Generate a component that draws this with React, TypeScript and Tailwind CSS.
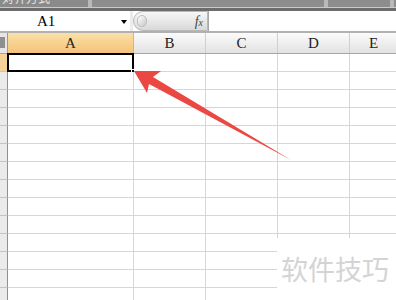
import React from "react";

const cols = [
  { key: "A", w: "w-[126px]" },
  { key: "B", w: "w-[72px]" },
  { key: "C", w: "w-[72px]" },
  { key: "D", w: "w-[72px]" },
];

const rows = Array.from({ length: 14 }, (_, i) => i + 1);

function RibbonStrip() {
  return (
    <div className="h-[11px] bg-[#6c6c6c]">
      <div className="flex h-[7px] gap-[4px] bg-[#b9b9b9]">
        <div className="relative w-[88px] overflow-hidden bg-[#8a8a8a]">
          <span className="absolute left-[2px] top-[-9px] text-[12px] leading-[14px] text-[#e6e6e6] [font-family:'Noto_Sans_CJK_SC',sans-serif]">
            对齐方式
          </span>
        </div>
        <div className="w-[232px] bg-[#8d8d8d]" />
        <div className="w-[62px] bg-[#8d8d8d]" />
        <div className="flex-1 bg-[#8d8d8d]" />
      </div>
      <div className="h-[1px] bg-[#c9c9c9]" />
    </div>
  );
}

function FormulaBar() {
  return (
    <div className="flex h-[22px] border-b-2 border-[#b1b1b1] bg-white">
      <div className="relative flex w-[130px] items-center pl-[37px] text-[15px] text-black [font-family:'Liberation_Serif',serif]">
        A1
        <span className="absolute left-[121px] top-[9px] h-0 w-0 border-x-[3.5px] border-t-[4px] border-x-transparent border-t-black" />
      </div>
      <div className="w-[3px] bg-[#ececec]" />
      <div className="flex w-[75px] items-center rounded-l-full border border-[#b8b8b8] bg-gradient-to-b from-[#f7f7f7] to-[#d9d9d9]">
        <span className="ml-[3px] h-[12px] w-[10px] rounded-full border border-[#bdbdbd] bg-gradient-to-br from-[#ffffff] to-[#c8c8c8]" />
        <span className="ml-auto mr-[4px] text-[14px] italic text-[#444] [font-family:'Liberation_Serif',serif]">
          f<span className="text-[10px]">x</span>
        </span>
      </div>
      <div className="flex-1 border-l border-[#a8a8a8] bg-white" />
    </div>
  );
}

function HeaderRow() {
  return (
    <div className="flex h-[21px] border-b border-[#a5a5a5] text-[15px] text-[#222] [font-family:'Liberation_Serif',serif]">
      <div className="w-[8px] border-r border-[#9a9a9a] bg-[#e6e6e6]">
        <div className="mt-[4px] h-[11px] w-[5px] bg-[#8f8f8f]" />
      </div>
      {cols.map((c) => (
        <div
          key={c.key}
          className={`${c.w} flex items-center justify-center border-r ${
            c.key === "A"
              ? "border-[#e0b56a] bg-gradient-to-b from-[#fbe0a6] to-[#f3c37a]"
              : "border-[#cfcfcf] bg-gradient-to-b from-[#fbfbfb] to-[#e2e2e2]"
          }`}
        >
          {c.key}
        </div>
      ))}
      <div className="flex flex-1 items-center justify-center bg-gradient-to-b from-[#fbfbfb] to-[#e2e2e2] pl-[1px]">
        E
      </div>
    </div>
  );
}

function GridRow({ n }: { n: number }) {
  return (
    <div className="flex h-[18px]">
      <div
        className={`w-[8px] border-b border-r border-b-[#c4c4c4] border-r-[#8f8f8f] ${
          n === 1 ? "bg-[#f5d396]" : "bg-[#ebebeb]"
        }`}
      />
      {cols.map((c) => (
        <div
          key={c.key}
          className={`${c.w} relative border-b border-r border-[#d6d6d6] bg-white`}
        >
          {n === 1 && c.key === "A" && (
            <>
              <div className="absolute left-[-1px] top-[-1px] h-[19px] w-[127px] border-2 border-black" />
              <div className="absolute right-[-3px] bottom-[-3px] h-[5px] w-[5px] border border-white bg-black" />
            </>
          )}
        </div>
      ))}
      <div className="flex-1 border-b border-[#d6d6d6] bg-white" />
    </div>
  );
}

export default function App() {
  return (
    <div className="relative h-[300px] w-[396px] overflow-hidden bg-white [font-family:'Liberation_Sans',sans-serif]">
      <RibbonStrip />
      <FormulaBar />
      <HeaderRow />
      {rows.map((n) => (
        <GridRow key={n} n={n} />
      ))}

      <div className="absolute bottom-0 left-[277px] right-0 top-[238px] bg-white">
        <div className="ml-[4px] mt-[15px] text-[27px] leading-[32px] text-[#d4d4d4] [font-family:'Noto_Sans_CJK_SC',sans-serif]">
          软件技巧
        </div>
      </div>

      <svg
        className="pointer-events-none absolute left-0 top-0"
        width="396"
        height="300"
        viewBox="0 0 396 300"
      >
        <polygon
          points="134,71 161,71 153,77 291,160 149,84 147,93"
          fill="#ec4843"
        />
      </svg>
    </div>
  );
}
